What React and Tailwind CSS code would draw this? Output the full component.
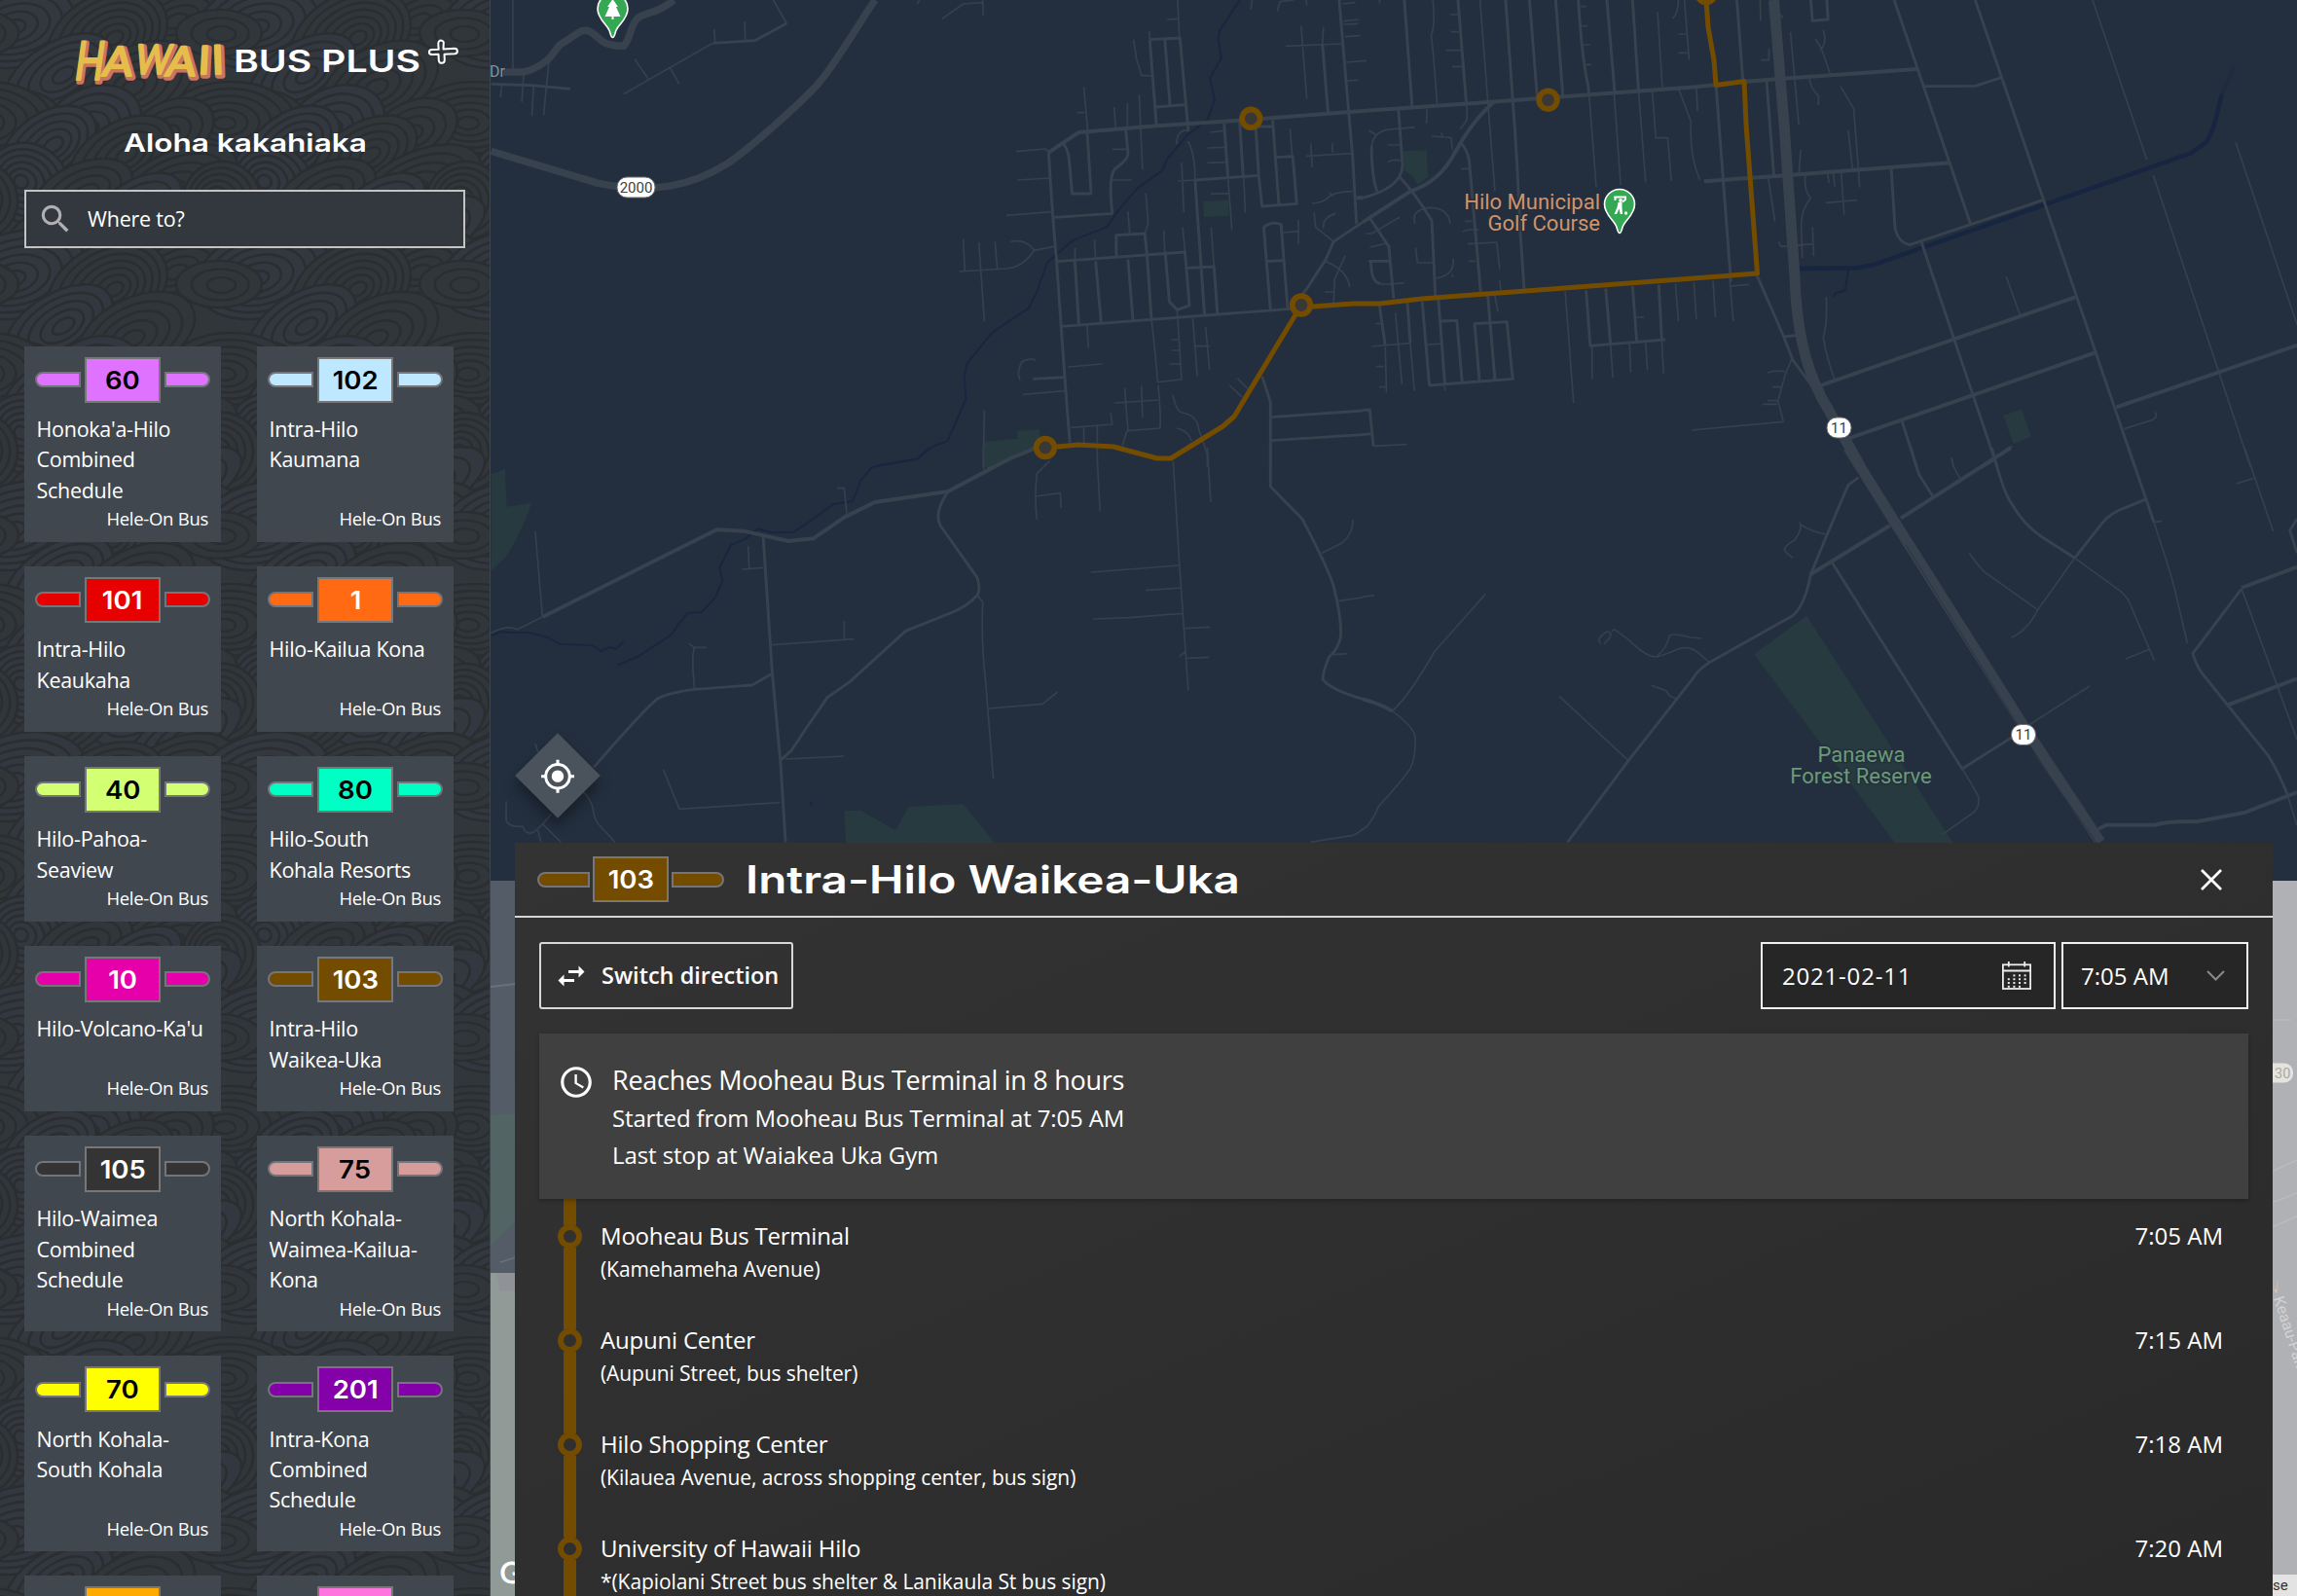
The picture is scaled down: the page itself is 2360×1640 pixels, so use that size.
import React from "react";
import { MdSearch, MdMyLocation, MdSwapHoriz, MdAccessTime } from "react-icons/md";

const ROUTES = [
  { id: "60", color: "#DF73FF", dark: true, lines: ["Honoka'a-Hilo", "Combined", "Schedule"] },
  { id: "102", color: "#BEE8FF", dark: true, lines: ["Intra-Hilo", "Kaumana"] },
  { id: "101", color: "#E60000", lines: ["Intra-Hilo", "Keaukaha"] },
  { id: "1", color: "#FF6A13", lines: ["Hilo-Kailua Kona"] },
  { id: "40", color: "#D3FF73", dark: true, lines: ["Hilo-Pahoa-", "Seaview"] },
  { id: "80", color: "#00FFC5", dark: true, lines: ["Hilo-South", "Kohala Resorts"] },
  { id: "10", color: "#E600A9", lines: ["Hilo-Volcano-Ka'u"] },
  { id: "103", color: "#734C00", lines: ["Intra-Hilo", "Waikea-Uka"] },
  { id: "105", color: "#343434", lines: ["Hilo-Waimea", "Combined", "Schedule"] },
  { id: "75", color: "#D69D9C", dark: true, lines: ["North Kohala-", "Waimea-Kailua-", "Kona"] },
  { id: "70", color: "#FFFF00", dark: true, lines: ["North Kohala-", "South Kohala"] },
  { id: "201", color: "#8400A8", lines: ["Intra-Kona", "Combined", "Schedule"] },
];

// Colours of the cards that peek in from below the fold.
const PEEKING = ["#FFAA00", "#FF73DF"];

const STOPS = [
  { name: "Mooheau Bus Terminal", desc: "(Kamehameha Avenue)", time: "7:05 AM" },
  { name: "Aupuni Center", desc: "(Aupuni Street, bus shelter)", time: "7:15 AM" },
  { name: "Hilo Shopping Center", desc: "(Kilauea Avenue, across shopping center, bus sign)", time: "7:18 AM" },
  { name: "University of Hawaii Hilo", desc: "*(Kapiolani Street bus shelter & Lanikaula St bus sign)", time: "7:20 AM" },
];

/* ---------- wave wallpaper ---------- */

const TILE_W = 250;
const TILE_H = 258;
// cx, cy, rx, ry, rotation
const HUMPS = [
  [20, 24, 70, 44, -14], [110, 40, 66, 46, -30], [185, 18, 60, 34, -22],
  [60, 78, 62, 34, -32], [140, 86, 64, 38, -26], [225, 34, 44, 24, 0],
  [95, 128, 52, 38, -24], [15, 118, 46, 26, 0], [176, 134, 46, 30, -24],
  [50, 150, 54, 34, -34], [237, 124, 66, 40, 0], [125, 160, 58, 34, -30],
  [28, 188, 44, 40, 34], [85, 198, 54, 30, -24], [180, 190, 68, 34, -24],
  [140, 214, 52, 28, -32], [228, 206, 40, 40, 30], [60, 236, 64, 28, -26],
  [190, 240, 64, 28, -28],
];

function WaveTile() {
  const items = [];
  HUMPS.forEach(([cx, cy, rx, ry, rot], i) => {
    for (const dx of [-TILE_W, 0, TILE_W]) {
      for (const dy of [-TILE_H, 0, TILE_H]) {
        items.push({ x: cx + dx, y: cy + dy, rx, ry, rot, i });
      }
    }
  });
  items.sort((a, b) => a.y - b.y || a.x - b.x);
  return items.map(({ x, y, rx, ry, rot, i }, n) => {
    const count = Math.floor(Math.min(rx, ry) / 6.4);
    return (
      <g key={n} transform={`translate(${x} ${y}) rotate(${rot})`}>
        {Array.from({ length: count }, (_, k) => (
          <ellipse
            key={k}
            cx={k * (i % 2 ? 1.2 : -1.2)}
            cy={k * 0.5}
            rx={rx * (1 - k / count)}
            ry={ry * (1 - k / count)}
            fill={i % 3 === 0 ? "#33373f" : "#31363b"}
            stroke="#2a2e31"
            strokeWidth="2.7"
          />
        ))}
      </g>
    );
  });
}

function Wallpaper() {
  return (
    <svg className="absolute inset-0 h-full w-full" aria-hidden="true">
      <defs>
        <pattern id="waves" width={TILE_W} height={TILE_H} patternUnits="userSpaceOnUse">
          <rect width={TILE_W} height={TILE_H} fill="#31363b" />
          <WaveTile />
        </pattern>
      </defs>
      <rect width="100%" height="100%" fill="url(#waves)" />
    </svg>
  );
}

/* ---------- logo ---------- */

// letter, x, baseline, size, slant, horizontal stretch
const LOGO_LETTERS = [
  ["H", 75, 82, 55, -8, 0.72], ["A", 104, 78, 42, -8, 1.08], ["W", 137, 76, 42, -10, 0.84],
  ["A", 169, 78, 42, -8, 1.08], ["I", 203, 76, 40, -3, 1.1], ["I", 218, 76, 41, 2, 1.1],
];

function LogoLayer({ dx, color, width }) {
  return (
    <g fill={color} stroke={color} strokeWidth={width} strokeLinejoin="round" strokeLinecap="round">
      {LOGO_LETTERS.map(([ch, x, y, size, slant, sx], i) => (
        <text
          key={i}
          transform={`translate(${x + dx} ${y + dx}) skewX(${slant}) scale(${sx} 1)`}
          fontFamily="Lato"
          fontSize={size}
          fontWeight="400"
        >
          {ch}
        </text>
      ))}
    </g>
  );
}

function Logo() {
  return (
    <div className="relative flex h-[88px] items-start">
      <svg className="absolute left-0 top-0" width="504" height="100" aria-hidden="true">
        <LogoLayer dx={1.8} color="#cb7462" width={5.5} />
        <LogoLayer dx={0} color="#e6bd4b" width={2.2} />
        <path
          d="M451 42.500c1.500-1.500 4.500-1 4.800 1l-.3 7 11.500-.7c3.500 0 4 4.700 .5 5.500l-11 .5.3 6c0 4-5.500 4-6 .3l-.3-6.300-7 .2c-3.500-.3-3.500-4.600.2-5l7-.3c-.2-3-1-7 .3-8.200z"
          fill="none"
          stroke="#fff"
          strokeWidth="2"
          strokeLinejoin="round"
        />
      </svg>
      <span className="ml-[240px] mt-[43px] origin-left scale-x-[1.245] whitespace-nowrap font-['Inter'] text-[31.500px] font-semibold leading-[40px]">
        BUS PLUS
      </span>
    </div>
  );
}

/* ---------- route badge ---------- */

function RouteBadge({ id, color, dark, wide }) {
  const pill = wide ? "h-[16px] w-[54px]" : "h-[16px] w-[47px]";
  return (
    <div className={wide ? "flex items-center gap-[3px]" : "flex items-center justify-between"}>
      <span className={pill + " rounded-l-full border-2 border-[#73757a]"} style={{ background: color }} />
      <span
        className={
          "flex h-[47px] w-[78px] items-center justify-center border-2 border-[#777] font-['Inter'] text-[26px] font-semibold " +
          (dark ? "text-black" : "text-white")
        }
        style={{ background: color }}
      >
        <span className="scale-x-[1.060]">{id}</span>
      </span>
      <span className={pill + " rounded-r-full border-2 border-[#73757a]"} style={{ background: color }} />
    </div>
  );
}

function RouteCard({ route }) {
  return (
    <article className="flex flex-col bg-[#41474f] px-[11px] pb-[11.500px] pt-[11px]">
      <RouteBadge {...route} />
      <p className="mt-[11.500px] whitespace-pre pl-[1.500px] text-[21.500px] leading-[31.300px] tracking-[-0.280px]">
        {route.lines.join("\n")}
      </p>
      <p className="mt-auto pr-[2px] pt-[1.400px] text-right text-[18.500px] leading-[25px] tracking-[-0.280px]">Hele-On Bus</p>
    </article>
  );
}

function Sidebar() {
  return (
    <aside className="relative w-[504px] shrink-0 overflow-hidden border-r border-[#3d444c] bg-[#31363b]">
      <Wallpaper />
      <div className="relative">
        <Logo />
        <h2 className="flex h-[107px] justify-center pt-[41px] font-['Inter'] text-[25.500px] font-semibold leading-[36px]">
          <span className="scale-x-[1.238] whitespace-nowrap">Aloha kakahiaka</span>
        </h2>
        <div className="ml-[25px] flex h-[60px] w-[453px] items-center border-2 border-[#c4c4c4] bg-[#33373e] pl-[11px]">
          <MdSearch className="size-[38px] text-[#b0b0b2]" />
          <span className="ml-[14px] text-[21.500px] tracking-[-0.200px]">Where to?</span>
        </div>
        <div className="ml-[25px] mt-[100.500px] grid w-[441px] grid-cols-[202px_202px] justify-between gap-y-[25px]">
          {ROUTES.map((r) => (
            <RouteCard key={r.id} route={r} />
          ))}
          {PEEKING.map((c) => (
            <div key={c} className="flex justify-center bg-[#41474f] pt-[11px]">
              <span className="h-[47px] w-[78px] border-2 border-[#777]" style={{ background: c }} />
            </div>
          ))}
        </div>
      </div>
    </aside>
  );
}

/* ---------- map ---------- */

const SHEETS = [
  {
    t: "translate(500 0) scale(0.57398 0.33333)",
    thin: "M47 0V215M112 180L102 355M84 265L81 357M66 230L63 315M27 262L25 300M245 290L405 133M265 182L290 245M328 208L345 260M407 90L409 132M462 66L463 126M513 0L537 72M770 12L775 0M815 58L853 12L888 8M888 0L889 47M1158 122L1163 180L1172 232L1190 234M1186 97L1187 122M1218 60L1237 58M1237 0L1240 115M1069 268L1076 405M1057 347L1070 347M1123 330L1126 395M1147 318V395M1168 292L1174 522M1120 460H1145M1118 555H1155M950 555L1007 549M930 664L1012 653M947 467L1000 459L1007 470M853 736L856 834M881 747L891 992M910 745L914 828M938 745Q965 735 980 772L1015 760M980 772Q960 825 930 828L846 837M1053 765V805M1088 740L1090 800M1148 652L1151 718M1180 595L1184 690L1178 720M1212 710L1214 785M1244 502L1248 655M1246 700L1250 776M1297 702L1302 822M1327 550L1334 710M1355 540L1358 656M1238 558L1268 555M1295 408L1320 403M1290 456L1322 454M1290 502L1324 500M1296 598L1328 596M1255 435Q1268 470 1268 555M1235 445Q1235 400 1255 402M1430 142L1530 135M1458 80L1468 303M1498 82L1496 135M1438 398L1442 482M1475 442L1478 516M1514 442V470M1467 481L1550 473M1532 12L1555 8M1534 65L1562 60M1534 75L1560 73M1536 113L1564 110M1538 192L1568 188M1540 249L1560 247M1477 627Q1500 625 1510 603Q1520 592 1550 590M1508 594L1516 605M1481 655L1484 700L1516 745M1498 705Q1495 670 1520 658M1453 678V752M1426 717L1452 713M1537 788L1518 860L1516 935M1500 900H1518M1500 805Q1540 830 1545 885M1420 5L1415 35M1370 0L1368 28M1467 0L1468 15M1420 5L1445 0M1075 1005L1077 1073M1040 1131L1102 1122M982 1112Q978 1100 958 1115Q948 1150 955 1172M960 1216L1035 1205M1046 1318L1120 1308L1117 1273M1069 1315V1365M1093 1312V1365M1124 1242L1202 1233M1142 1195L1148 1328L1205 1320Q1208 1300 1202 1188M1172 1190L1174 1286M1190 985Q1198 1100 1201 1178L1244 1170L1236 955M1225 1047H1240M1226 1080H1242M1222 1122H1242M1264 980L1272 1160M1287 1008L1294 1141M1268 1067H1295M1228 1216Q1235 1270 1245 1272Q1272 1280 1275 1325L1290 1400V1440M1235 1320Q1255 1325 1262 1360M1330 1188L1352 1224M1344 1166L1362 1198M891 1265L889 1440M1146 1328L1138 1375",
    mid: "M8 259L80 263L150 274M405 133L480 125L537 72M1187 122L1241 117L1256 405M1187 122L1199 388M1214 122L1223 322M1199 330L1249 323M1006 470Q1012 650 1020 800Q1035 1180 1044 1365M1030 438Q1042 460 1043 500L1048 597H1082L1075 408M1144 402L1148 470Q1150 490 1125 520Q1112 545 1120 658L1016 670M1022 806L1250 777L1258 942L1236 955L1222 930L1215 785M1127 795V725L1178 720L1182 785M1053 806L1060 1000M1090 805L1100 995M1148 800L1157 988M1182 785L1190 985M1030 1006L1440 952M1320 380L1327 548M1268 555L1382 541L1376 370M1348 375L1354 540M1268 555L1285 970M1254 826L1302 822L1308 965M1407 370L1418 630M1382 541L1388 636L1450 628L1443 482L1412 485M1380 390H1408M1403 955L1391 700Q1405 680 1422 692L1434 955M1395 806L1426 803M1526 0L1543 345L1550 480L1557 690M1496 135L1506 345M978 1168L1035 1163M1388 1160L1403 1240V1440M1404 1286L1568 1266M1404 1358L1568 1340M1440 952L1468 890L1502 800L1516 745L1568 685",
    main: "M1006 470L1060 408L1200 388L1340 372L1568 342M1557 610H1568M895 1440L975 1385L985 1380",
    big: "M30 222H65C90 215 105 190 112 180L130 140L165 100C180 85 190 100 205 125C215 140 235 142 245 142C258 120 255 90 268 60C280 35 300 50 335 0M8 466L200 565C300 600 370 570 430 505C470 460 560 320 590 265C620 210 660 90 695 0",
    water: "M1348 0L1312 95L1310 120L1315 180L1295 240L1303 310L1290 370L1255 415L1218 490L1210 525L1165 580L1130 650L1110 700L1050 740L1003 810L985 900L970 950L905 1025L860 1120L855 1160L858 1230L825 1360L800 1375L770 1415L700 1435",
    park: "M1282 622L1328 616V665L1284 670ZM889 1362L950 1352V1328L990 1324V1375L895 1440H890Z",
  },
  {
    t: "translate(1400 0) scale(0.61224 0.33333)",
    thin: "M118 0Q122 80 115 110Q118 140 125 320M197 0L210 310M147 45H160M148 98H162M140 155H165M150 205H168M366 20H376M368 80H378M370 138H382M372 200H384M495 38L503 268M530 0Q530 40 520 58M540 0L548 185M530 105H543M530 163H546M560 270L562 343M667 0L668 65M682 150V185H668M700 45L706 55M718 100L732 385M760 120L770 150L785 230M773 92Q780 130 768 155M750 243Q752 275 765 295V325M802 266L824 335L832 520M815 402L822 520M735 462L732 540M780 535L783 565M790 530L792 575M803 530L808 662M832 520L834 578M777 625L830 617M743 540Q740 590 752 610Q735 650 736 700L738 795M755 700L757 790M757 752L702 760L698 745M210 310L222 590M380 290L392 578M422 290L433 570M463 280L475 562M486 280L492 425H512L518 558M530 272L551 375Q548 480 566 555M680 540L692 682M108 335L107 382M175 320V370L164 398M88 392L40 400Q18 410 15 450M10 402L22 415M42 447H62M42 500Q50 490 64 495M116 420L148 424L151 460M132 410L135 425M165 520H180M88 690Q80 650 110 640Q145 640 147 690M62 670L15 720H5M118 810H92L89 763M152 797Q155 850 122 858M150 845L152 855M176 752L225 747L230 830M178 805H190M168 715Q175 705 195 708M172 682H184M12 762L40 750M70 872Q40 878 30 875M230 865L232 895M340 898L354 1242M55 965L66 1185M38 1070L40 1210M60 1065L66 1180M80 1060L87 1205M22 1130H35M28 1193H38M22 998H32M15 1068L80 1058M222 910L227 962M105 1062L132 1060M385 1065V1168M416 1065L420 1165M448 1058L450 1148M475 1055L478 1142M502 1048L505 1152M458 978H472M525 875L530 990M556 870L560 985M588 865L592 978M616 860L622 990M648 877L618 882M136 1185L139 1203M720 1108L710 1150L697 1235L706 1300L552 1326M680 1150Q690 1140 708 1145M688 1193H702M680 1235H698M672 1246H696M778 915Q780 1000 773 1040Q778 1100 792 1170M1080 853L1103 970M1225 0L1316 493M1327 541L1490 1440M1465 438L1568 1000M1278 1322L1325 1295Q1335 1285 1330 1270M1090 1375L1060 1415M988 1410L992 1440M18 1375L75 1370M0 188H6M28 0L29 10",
    mid: "M70 0L83 328M160 0L174 318M240 0L252 310Q260 500 264 700L271 890M280 0L293 300M324 0L336 296M362 0Q368 180 378 260L380 290M410 0L423 285M453 0L463 278M628 0L638 245M593 262L618 868M678 252L690 540M752 0L755 64L781 60L779 0M60 335L67 510Q65 580 0 610M15 450Q15 540 24 590M165 440Q180 470 180 520L198 900M62 545Q90 600 116 680L122 912M12 672L44 760L52 920M10 805H44M14 808Q14 870 30 875M28 938L38 1065M75 930L80 1058M100 930L112 1188L252 1168L242 992L188 998L196 1172M127 920L138 1185M132 990L158 988L167 1178M210 910L222 1170M375 895L382 1066L508 1047M408 890L416 1062M453 882L460 1052M497 878L502 1047M0 1265L12 1263L18 1375M0 1340L18 1336M662 850L706 1035L722 1110L758 1200M706 1038L732 1033M887 518L893 690Q895 745 918 755L1145 615M892 0L1020 690M938 748L1065 1440M1028 0L1230 1085L1296 1440M942 266L1028 265L1073 238M905 1298L930 1440",
    main: "M0 342L210 315L560 268L640 252L700 243L930 213M573 559L700 542L985 502M220 315Q185 370 155 470Q130 560 80 590L0 685M766 1190L1196 916M815 1352L1228 1088M1265 1255L1568 1065M1060 1415L1038 1440",
    big: "",
    hwy: "M690 0L708 400L725 850C728 1000 740 1120 770 1225L836 1440",
    water: "M815 830L810 895L795 902L790 915",
    canal: "M733 828L830 826L860 815L1390 472L1415 440C1430 400 1435 340 1442 290",
    creek: "M1442 290L1462 205",
    park: "M68 466L107 462L110 545L93 570L85 545L70 525ZM1075 1280L1106 1262L1122 1345L1092 1368Z",
  },
  {
    t: "translate(500 460) scale(0.57398 0.33333)",
    thin: "M87 258L100 522M8 572Q35 545 55 560L100 522M627 125H640L645 210M468 303L470 372M457 375L495 370M640 535V592M511 608L658 590M362 604L372 616H394M372 616Q366 640 372 742M316 992L345 1114L525 1094M535 960L640 951M878 455L888 475Q885 600 893 720L907 1020M899 804L995 790L1022 753M1008 40L985 80Q980 150 985 222M983 150L1027 140L1028 185M1093 0V40L1098 195M1229 42L1240 360L1256 748M1081 384L1240 363M1180 440L1242 432M1085 528L1150 524L1245 511M1250 557L1295 553M1254 649L1293 646M1240 643L1252 627M1290 0L1296 167M1495 325L1530 295Q1550 270 1551 222M1524 473L1568 462M1515 638L1540 635M1475 1216L1550 1195Q1560 1190 1568 1175M87 912L92 940M35 1090V1150Q40 1170 65 1168Q68 1190 80 1188Q92 1180 115 1130M100 1160L133 1216M92 1180L97 1216M173 1062Q185 1080 190 1110Q192 1150 205 1170L230 1216M889 0L890 70",
    mid: "M495 275L511 690L526 970L535 1216M826 135Q800 200 812 240L878 400Q885 440 878 455Q860 490 830 510L750 565L650 722L610 770L570 870L545 935L525 965M511 697L475 732L372 745Q325 755 305 775Q280 810 192 985M1403 0V120L1460 220Q1500 350 1515 420Q1530 520 1529 580Q1525 620 1508 645Q1495 700 1497 715Q1510 745 1568 775",
    main: "M100 522L412 253L460 257L540 288L585 280L640 215L695 168L826 135L935 35L985 0",
    big: "",
    water: "M792 0L770 35L690 60L670 100L655 165L620 175L580 225L550 260L510 262L485 250L465 280L437 300L417 370L422 410L410 460L385 507L360 510L345 540L330 578L270 645L235 670M8 580L25 567L45 570L75 570L110 585L130 605L190 610L205 628L220 615L232 620L245 598M581 1092V1105",
    park: "M889 0H975L895 62ZM8 82L33 66L36 182L81 170Q60 270 35 335L8 380ZM640 1120L670 1118L732 1180L755 1107L853 1099L910 1220H643Z",
  },
  {
    t: "translate(1400 460) scale(0.61224 0.33333)",
    thin: "M206 452L120 630Q80 760 50 812M50 812Q85 860 88 890Q90 950 80 990Q60 1040 27 1105Q15 1160 0 1178M0 460L20 455M330 766L446 965M400 605Q390 590 410 567Q425 570 405 605M418 567L422 560L445 590Q475 645 492 645Q505 640 530 620Q550 610 565 635L582 662M495 640Q510 620 515 580Q520 570 550 585L569 588M485 733L510 750L515 765L528 775M733 230Q740 245 725 285Q700 310 712 325L722 340M735 238Q755 260 777 267M988 30Q990 60 1003 95M1018 325Q1035 370 1045 385L1133 500M1195 340L1133 500Q1115 565 1089 585M1280 652L1320 622M1195 340L1270 440Q1285 460 1292 500L1329 657M1328 230L1341 226M1328 230Q1355 380 1362 430L1384 603M1480 0L1528 258M1466 111L1495 95M1118 855L1220 735M1006 990Q1030 1060 1034 1080Q1035 1110 1025 1125L973 1192M1552 1070L1568 1165M1475 435L1568 900",
    mid: "M832 92L815 115Q790 220 752 390Q742 490 720 520L582 662Q560 690 555 710L446 965L344 1216M788 355L1006 990L1118 860M920 0Q930 70 936 90L957 150M1056 0Q1075 140 1090 175Q1110 240 1140 275L1195 340M1285 0L1328 230M1313 160L1280 185Q1255 200 1240 235L1195 340M1475 435L1393 635Q1400 680 1415 710L1520 950Q1540 1010 1552 1070M1568 220L1556 255L1568 325",
    main: "M1088 0L903 218M885 240L752 390M1475 432L1568 368M1452 793L1568 712M0 775Q30 790 50 812M1235 1175L1248 1163H1330Q1350 1150 1400 1153L1480 1125L1568 1062",
    big: "",
    hwy: "M815 0L900 250L1110 860L1238 1216",
    water: "",
    park: "M745 518L657 637L895 1222H992Z",
  },
];

function Shield({ x, y, w, children }) {
  return (
    <g>
      <rect x={x - w / 2} y={y - 10.5} width={w} height="21" rx="10" fill="#fff" stroke="#6b6b6b" strokeWidth="1" />
      <text x={x} y={y + 5.3} textAnchor="middle" fontFamily="Roboto" fontSize="15" fill="#3c4043">
        {children}
      </text>
    </g>
  );
}

function Pin({ x, y, children }) {
  return (
    <g transform={`translate(${x} ${y})`}>
      <path
        d="M0 28.500C-1.500 28.500-2 26-3 22.500C-5 15.500-15.500 10-15.500-1A15.500 15.500 0 0 1 15.500-1C15.500 10 5 15.500 3 22.500C2 26 1.500 28.500 0 28.500Z"
        fill="#34a853"
        stroke="#fff"
        strokeWidth="1.600"
      />
      {children}
    </g>
  );
}

const BUS_STOPS = [[1285.3, 121.8], [1337, 313.5], [1074, 460], [1590.5, 102.7], [1753, -7]];

function MapCanvas() {
  return (
    <svg className="absolute inset-0" width="1856" height="1640" viewBox="504 0 1856 1640" aria-hidden="true">
      <rect x="504" y="0" width="1856" height="905" fill="#232f3e" />
      {SHEETS.map((s, i) => (
        <g key={i} transform={s.t} fill="none" stroke="#38424f" strokeLinejoin="round">
          <path d={s.park} fill="#273a3f" stroke="none" />
          <path d={s.water} stroke="#1a2640" strokeWidth="2" vectorEffect="non-scaling-stroke" />
          {s.canal && <path d={s.canal} stroke="#182540" strokeWidth="4.500" vectorEffect="non-scaling-stroke" />}
          {s.creek && <path d={s.creek} stroke="#1f2b3e" strokeWidth="3" vectorEffect="non-scaling-stroke" />}
          <path d={s.thin} stroke="#35404d" strokeWidth="1.700" vectorEffect="non-scaling-stroke" />
          <path d={s.mid} strokeWidth="2.900" vectorEffect="non-scaling-stroke" />
          <path d={s.main} strokeWidth="4" vectorEffect="non-scaling-stroke" />
          <path d={s.big} strokeWidth="7.500" vectorEffect="non-scaling-stroke" />
          {s.hwy && <path d={s.hwy} strokeWidth="11" vectorEffect="non-scaling-stroke" />}
        </g>
      ))}
      <path d="M1958 560L2077 751M2090 775L2157 870" stroke="#2c3745" strokeWidth="1.200" fill="none" />

      <g fill="none" stroke="#734c00" strokeWidth="5" strokeLinejoin="round">
        <path d="M1753 0L1755 28L1761 62L1763 87.500L1792 83.500L1794 128L1805.500 281L1461 307L1417 312L1390 312L1349 315L1337 313.500L1268 428L1256.500 438L1203 471H1189L1144 459L1108 457L1076 460" />
        {BUS_STOPS.map(([x, y]) => (
          <circle key={x} cx={x} cy={y} r="9.300" fill="#3a3836" strokeWidth="5.800" />
        ))}
      </g>

      <text x="503" y="79" fontFamily="Roboto" fontSize="16" fill="#82959a">Dr</text>
      <Shield x={653.5} y={192.5} w={39}>2000</Shield>
      <Shield x={1889.5} y={439.5} w={25}>11</Shield>
      <Shield x={2079} y={755} w={25}>11</Shield>

      <g fontFamily="Roboto" fontSize="22" stroke="#232f3e" strokeWidth="3" paintOrder="stroke" strokeLinejoin="round">
        <g fill="#d0936a" textAnchor="end">
          <text x="1644" y="214.500">Hilo Municipal</text>
          <text x="1644" y="236.500">Golf Course</text>
        </g>
        <g fill="#6b9a76" textAnchor="middle">
          <text x="1912.500" y="782.500">Panaewa</text>
          <text x="1912" y="804.500">Forest Reserve</text>
        </g>
      </g>

      <Pin x={629.500} y={10}>
        <path d="M0-11L5.500-3H3.500L8 7H1V10H-1V7H-8L-3.500-3H-5.500Z" fill="#fff" />
      </Pin>
      <Pin x={1664} y={211}>
        <path d="M-5.500-8.500H6V-6L3-3.500" stroke="#fff" fill="none" strokeWidth="2" />
        <path d="M-4.500-9V-5" stroke="#fff" fill="none" strokeWidth="2" />
        <path d="M-1.500-3H2.500V2L3 9H.8L-.5 3.500L-3 9H-5.500L-2.500 2Z" fill="#fff" />
        <circle cx="1" cy="-5" r="1.900" fill="#fff" />
        <circle cx="6.500" cy="8" r="1.700" fill="#fff" />
      </Pin>

      {/* tiles still loading beneath the schedule */}
      <rect x="504" y="905" width="26" height="403" fill="#545c68" />
      <path d="M504 1014L530 1011" stroke="#69717b" strokeWidth="2" />
      <path d="M504 1146L530 1144V1254L504 1280Z" fill="#526463" />
      <path d="M514 1297L530 1292" stroke="#6a717b" strokeWidth="1.500" />
      <rect x="504" y="1308" width="26" height="332" fill="#929a98" />
      <path d="M510 1308H530V1326L514 1327Z" fill="#8f9297" />
      <text x="513.500" y="1627" fontFamily="Lato" fontSize="30" fontWeight="400" fill="#fff" stroke="#fff" strokeWidth=".8">Google</text>
      <rect x="2334" y="905" width="26" height="735" fill="#b0b1b4" />
      <path d="M2334 1048H2354M2334 1204L2360 1192M2334 1236L2360 1226M2334 1261L2360 1250" stroke="#bbbbba" strokeWidth="1.500" />
      <rect x="2320" y="1092.500" width="36" height="20" rx="9" fill="#e4e3dd" />
      <text x="2337" y="1108" fontFamily="Roboto" fontSize="14.500" fill="#a8a8a6">30</text>
      <text x="2332" y="1326" fontFamily="Roboto" fontSize="17" fill="#cdb5a4">u</text>
      <text transform="translate(2333 1326) rotate(72)" fontFamily="Roboto" fontSize="16" fill="#d2d2d3">
        - Keaau-Pahoa
      </text>
      <rect x="2334" y="1618" width="26" height="22" fill="#e3e3e3" />
      <text x="2335" y="1634" fontFamily="Roboto" fontSize="15" fill="#333">se</text>
    </svg>
  );
}

/* ---------- schedule sheet ---------- */

function CalendarIcon() {
  const dots = [];
  for (let r = 0; r < 4; r++)
    for (let c = 0; c < 4; c++) if (!(r === 0 && c === 0) && !(r === 3 && c === 3)) dots.push([5.8 + c * 5.6, 13.4 + r * 3.8]);
  return (
    <svg width="30" height="29" viewBox="0 0 30 29" fill="none" stroke="#ececec" strokeWidth="1.800">
      <rect x=".9" y="3.300" width="28.200" height="24.700" />
      <path d="M1 9.500H29M6.800 0V5.500M23.200 0V5.500" />
      {dots.map(([x, y], i) => (
        <rect key={i} x={x} y={y} width="2" height="2" fill="#ececec" stroke="none" />
      ))}
    </svg>
  );
}

function ScheduleSheet() {
  return (
    <section className="relative flex h-[774px] flex-col overflow-hidden bg-linear-to-br from-[#333333] to-[#2a2a2a]">
      <header className="flex h-[77px] shrink-0 items-center border-b-2 border-[#d6d6d6] pl-[23px] pr-[52px]">
        <RouteBadge id="103" color="#734C00" wide />
        <h1 className="ml-[22px] origin-left scale-x-[1.221] whitespace-nowrap font-['Inter'] text-[39px] font-semibold leading-[48px]">
          Intra-Hilo Waikea-Uka
        </h1>
        <svg className="ml-auto" width="22" height="22" viewBox="0 0 22 22" stroke="#fff" strokeWidth="2.800">
          <path d="M1 1L21 21M21 1L1 21" />
        </svg>
      </header>

      <div className="flex flex-1 flex-col pl-[25px] pr-[25px] pt-[25px]">
        <div className="flex h-[69px] items-stretch">
          <button className="flex w-[261px] items-center rounded-[3px] border-2 border-[#d8d8d8] pl-[13px] text-[23.500px] font-semibold">
            <MdSwapHoriz className="size-[36px]" />
            <span className="ml-[13px] whitespace-nowrap">Switch direction</span>
          </button>
          <div className="ml-auto flex w-[303px] items-center justify-between border-2 border-[#f0f0f0] bg-[#262626] pl-[20px] pr-[23px] text-[24px]">
            <span className="tracking-[0.800px]">2021-02-11</span>
            <CalendarIcon />
          </div>
          <div className="ml-[6px] flex w-[192px] items-center justify-between border-2 border-[#f0f0f0] bg-[#262626] pl-[18px] pr-[22px] text-[24px]">
            <span>7:05 AM</span>
            <svg width="19" height="11" viewBox="0 0 19 11" fill="none" stroke="#8a8a8a" strokeWidth="2">
              <path d="M1 1L9.500 9.500L18 1" />
            </svg>
          </div>
        </div>

        <div className="relative z-10 mt-[25px] flex h-[170px] shrink-0 bg-[#404040] pl-[19px] pt-[27px] shadow-[0_2px_4px_rgba(0,0,0,0.25)]">
          <MdAccessTime className="mt-[4px] size-[38px]" />
          <div className="ml-[18px] whitespace-nowrap">
            <p className="text-[27px] leading-[41px] tracking-[-0.270px]">Reaches Mooheau Bus Terminal in 8 hours</p>
            <p className="text-[24px] leading-[38px] tracking-[-0.160px]">Started from Mooheau Bus Terminal at 7:05 AM</p>
            <p className="text-[24px] leading-[38px] tracking-[-0.080px]">Last stop at Waiakea Uka Gym</p>
          </div>
        </div>

        <ol className="flex flex-col">
          {STOPS.map((s) => (
            <li key={s.name} className="flex h-[107px] shrink-0 pl-[18px] pr-[26px]">
              <div className="flex w-[26px] flex-col items-center">
                <span className="h-[27px] w-[13px] bg-[#734C00]" />
                <span className="-my-px size-[25px] shrink-0 rounded-full border-[6px] border-[#734C00]" />
                <span className="w-[13px] flex-1 bg-[#734C00]" />
              </div>
              <div className="ml-[19px] whitespace-nowrap pt-[20px]">
                <p className="text-[24px] leading-[36px] tracking-[-0.200px]">{s.name}</p>
                <p className="text-[21px] leading-[32px] tracking-[-0.080px]">{s.desc}</p>
              </div>
              <p className="ml-auto pt-[20px] text-[24px] leading-[36px]">{s.time}</p>
            </li>
          ))}
        </ol>
      </div>
    </section>
  );
}

export default function App() {
  return (
    <div className="flex h-[1640px] w-[2360px] overflow-hidden bg-[#232f3e] font-['Open_Sans',sans-serif] text-white">
      <Sidebar />
      <main className="relative flex flex-1 flex-col justify-end overflow-hidden pl-[25px] pr-[25px]">
        <MapCanvas />
        <button className="absolute left-[37.500px] top-[765.500px] flex size-[62px] rotate-45 items-center justify-center bg-[#4a525c] shadow-[6px_6px_14px_rgba(0,0,0,0.35)]">
          <MdMyLocation className="size-[37px] -rotate-45" />
        </button>
        <ScheduleSheet />
      </main>
    </div>
  );
}
